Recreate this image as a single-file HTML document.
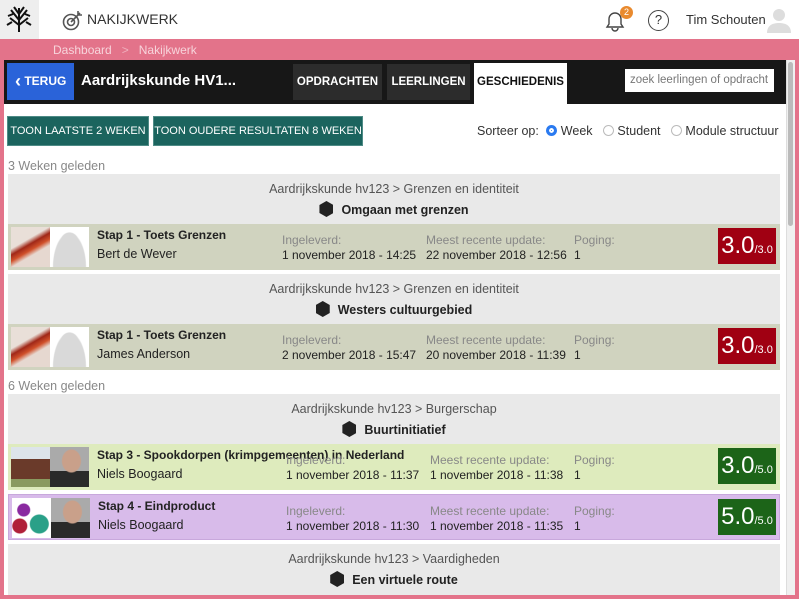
<!DOCTYPE html>
<html><head><meta charset="utf-8"><style>
*{margin:0;padding:0;box-sizing:border-box}
body{width:799px;height:599px;overflow:hidden;position:relative;background:#e3738a;font-family:"Liberation Sans",sans-serif;color:#222}
.a{position:absolute;white-space:nowrap}
.top{left:0;top:0;width:799px;height:39px;background:#fff}
.logo{left:0;top:0;width:39px;height:39px;background:#eee}
.main{left:4px;top:60px;width:791px;height:535px;background:#fff}
.bar{left:4px;top:60px;width:782px;height:44px;background:#171717}
.tab{top:64px;height:36px;background:#2c2c2c;color:#fff;font-weight:bold;font-size:11.5px;line-height:36px;text-align:center}
.btn{top:116px;height:30px;background:#1b645e;color:#fff;font-size:11px;line-height:28px;text-align:center;border:1px solid #4e8b86;overflow:hidden}
.grp{left:8px;width:772px;background:#e9e9e9;text-align:center}
.grp .p{font-size:12.5px;color:#555;margin-top:8px}
.grp .b{font-size:12.5px;font-weight:bold;margin-top:5px}
.hex{display:inline-block;width:14px;height:16px;background:#222;clip-path:polygon(50% 0,100% 25%,100% 75%,50% 100%,0 75%,0 25%);vertical-align:-3px;margin-right:8px}
.row{left:8px;width:772px;height:46px}
.row .t{position:absolute;left:89px;top:4px;font-weight:bold;font-size:12px}
.row .n{position:absolute;left:89px;top:23px;font-size:12.5px}
.lbl{position:absolute;top:9px;font-size:12px;color:#888}
.val{position:absolute;top:24px;font-size:12px;color:#222}
.img1{position:absolute;left:3px;top:3px;width:39px;height:40px}
.img2{position:absolute;left:42px;top:3px;width:39px;height:40px;background:#fff}
.sc{position:absolute;left:710px;top:4px;width:58px;height:36px;color:#fff;font-size:24px;line-height:36px;text-align:center}
.sc small{font-size:11px}
.wk{left:8px;font-size:12.5px;color:#888}
.pen{background:linear-gradient(150deg,#e9dfd8 0,#e9dfd8 35%,#a02818 45%,#d0502a 55%,#e6d8d0 65%)}
.avatar{background:radial-gradient(circle at 50% 35%,#d9d9d9 0 8px,transparent 9px),radial-gradient(ellipse at 50% 100%,#d9d9d9 0 16px,transparent 17px) #fff}
.man{background:radial-gradient(ellipse at 55% 35%,#c9a08a 0 9px,transparent 10px),linear-gradient(#aaa 0,#aaa 60%,#2a2a2a 60%)}
</style></head><body>
<div class="a top"></div>
<div class="a logo"><svg width="39" height="39" viewBox="0 0 39 39"><g stroke="#111" stroke-width="2" fill="none"><path d="M19 32V8M19 20L11 10M19 20l8-10M19 25L10 18M19 25l9-7M19 14l-5-7M19 14l5-7M13 14l-5 2M25 14l5 2M12 22l-5 3M26 22l5 3"/></g></svg></div>
<svg class="a" style="left:62px;top:9px" width="22" height="22" viewBox="0 0 22 22"><circle cx="9" cy="13" r="7.5" fill="none" stroke="#555" stroke-width="1.6"/><circle cx="9" cy="13" r="3.5" fill="none" stroke="#555" stroke-width="1.6"/><path d="M9 13L18 4M16 2v4h4" stroke="#555" stroke-width="1.6" fill="none"/></svg>
<div class="a" style="left:87px;top:11px;font-size:14px;color:#333">NAKIJKWERK</div>
<svg class="a" style="left:604px;top:10px" width="24" height="22" viewBox="0 0 24 22"><path d="M3 17h16l-2-3V9a6 6 0 0 0-12 0v5zM8 18a3 3 0 0 0 6 0" fill="none" stroke="#444" stroke-width="1.4"/></svg>
<div class="a" style="left:620px;top:6px;width:13px;height:13px;border-radius:50%;background:#e98a2e;color:#fff;font-size:9px;text-align:center;line-height:13px">2</div>
<div class="a" style="left:648px;top:10px;width:21px;height:21px;border:1.5px solid #444;border-radius:50%;text-align:center;font-size:13px;line-height:18px;color:#333">?</div>
<div class="a" style="left:686px;top:12px;font-size:13px;color:#333">Tim Schouten</div>
<svg class="a" style="left:766px;top:7px" width="26" height="26" viewBox="0 0 26 26"><circle cx="13" cy="8" r="6" fill="#ddd"/><path d="M1 26c0-8 6-10 12-10s12 2 12 10z" fill="#ddd"/></svg>
<div class="a" style="left:53px;top:43px;font-size:12px;color:#f7d4db">Dashboard &nbsp; <span style="color:#f0b0be">&gt;</span> &nbsp; Nakijkwerk</div>
<div class="a main"></div>
<div class="a bar"></div>
<div class="a" style="left:7px;top:63px;width:67px;height:37px;background:#2a63d9;color:#fff;font-weight:bold;font-size:12px;line-height:37px;padding-left:8px"><span style="font-size:18px;vertical-align:-2px">‹</span> TERUG</div>
<div class="a" style="left:81px;top:72px;color:#fff;font-weight:bold;font-size:15px">Aardrijkskunde HV1...</div>
<div class="a tab" style="left:293px;width:89px">OPDRACHTEN</div>
<div class="a tab" style="left:387px;width:83px">LEERLINGEN</div>
<div class="a tab" style="left:474px;width:93px;top:63px;height:41px;line-height:38px;background:#fff;color:#111">GESCHIEDENIS</div>
<div class="a" style="left:625px;top:69px;width:149px;height:23px;background:#fff;font-size:11.5px;color:#777;line-height:23px;padding-left:5px;overflow:hidden">zoek leerlingen of opdracht</div>
<div class="a" style="left:786px;top:60px;width:9px;height:535px;background:#f0f0f0;border-left:1px solid #ddd"></div>
<div class="a" style="left:788px;top:62px;width:5px;height:164px;background:#bbb;border-radius:3px"></div>
<div class="a btn" style="left:7px;width:142px">TOON LAATSTE 2 WEKEN</div>
<div class="a btn" style="left:153px;width:210px">TOON OUDERE RESULTATEN 8 WEKEN</div>
<div class="a" style="left:477px;top:124px;font-size:12.5px;color:#333">Sorteer op: <span style="display:inline-block;width:11px;height:11px;border-radius:50%;background:#2a7af0;border:3px solid #2a7af0;box-shadow:inset 0 0 0 2px #fff;vertical-align:-1px;margin-left:4px"></span> Week &nbsp; <span style="display:inline-block;width:11px;height:11px;border-radius:50%;border:1px solid #bbb;vertical-align:-1px"></span> Student &nbsp; <span style="display:inline-block;width:11px;height:11px;border-radius:50%;border:1px solid #bbb;vertical-align:-1px"></span> Module structuur</div>

<div class="a wk" style="top:159px">3 Weken geleden</div>
<div class="a grp" style="top:174px;height:50px"><div class="p">Aardrijkskunde hv123 &gt; Grenzen en identiteit</div><div class="b"><span class="hex"></span>Omgaan met grenzen</div></div>
<div class="a row" style="top:224px;background:#d0d3bf"><div class="img1 pen"></div><div class="img2 avatar"></div><div class="t">Stap 1 - Toets Grenzen</div><div class="n">Bert de Wever</div>
<div class="lbl" style="left:274px">Ingeleverd:</div><div class="val" style="left:274px">1 november 2018 - 14:25</div>
<div class="lbl" style="left:418px">Meest recente update:</div><div class="val" style="left:418px">22 november 2018 - 12:56</div>
<div class="lbl" style="left:566px">Poging:</div><div class="val" style="left:566px">1</div>
<div class="sc" style="background:#a00012">3.0<small>/3.0</small></div></div>

<div class="a grp" style="top:274px;height:50px"><div class="p">Aardrijkskunde hv123 &gt; Grenzen en identiteit</div><div class="b"><span class="hex"></span>Westers cultuurgebied</div></div>
<div class="a row" style="top:324px;background:#d0d3bf"><div class="img1 pen"></div><div class="img2 avatar"></div><div class="t">Stap 1 - Toets Grenzen</div><div class="n">James Anderson</div>
<div class="lbl" style="left:274px">Ingeleverd:</div><div class="val" style="left:274px">2 november 2018 - 15:47</div>
<div class="lbl" style="left:418px">Meest recente update:</div><div class="val" style="left:418px">20 november 2018 - 11:39</div>
<div class="lbl" style="left:566px">Poging:</div><div class="val" style="left:566px">1</div>
<div class="sc" style="background:#a00012">3.0<small>/3.0</small></div></div>

<div class="a wk" style="top:379px">6 Weken geleden</div>
<div class="a grp" style="top:394px;height:50px"><div class="p">Aardrijkskunde hv123 &gt; Burgerschap</div><div class="b"><span class="hex"></span>Buurtinitiatief</div></div>
<div class="a row" style="top:444px;background:#deebbd"><div class="img1" style="background:linear-gradient(#dde4ea 0,#dde4ea 30%,#6a3a2a 30%,#6a3a2a 80%,#8a9a60 80%)"></div><div class="img2 man"></div><div class="t">Stap 3 - Spookdorpen (krimpgemeenten) in Nederland</div><div class="n">Niels Boogaard</div>
<div class="lbl" style="left:278px">Ingeleverd:</div><div class="val" style="left:278px">1 november 2018 - 11:37</div>
<div class="lbl" style="left:422px">Meest recente update:</div><div class="val" style="left:422px">1 november 2018 - 11:38</div>
<div class="lbl" style="left:566px">Poging:</div><div class="val" style="left:566px">1</div>
<div class="sc" style="background:#1c6418">3.0<small>/5.0</small></div></div>

<div class="a row" style="top:494px;background:#d8bbea;border:1px solid #c8a8dc"><div class="img1" style="background:radial-gradient(circle at 30% 30%,#8a2aa0 0 6px,transparent 7px),radial-gradient(circle at 70% 65%,#2aa088 0 9px,transparent 10px),radial-gradient(circle at 20% 70%,#b0203a 0 7px,transparent 8px) #fff"></div><div class="img2 man"></div><div class="t">Stap 4 - Eindproduct</div><div class="n">Niels Boogaard</div>
<div class="lbl" style="left:277px">Ingeleverd:</div><div class="val" style="left:277px">1 november 2018 - 11:30</div>
<div class="lbl" style="left:421px">Meest recente update:</div><div class="val" style="left:421px">1 november 2018 - 11:35</div>
<div class="lbl" style="left:565px">Poging:</div><div class="val" style="left:565px">1</div>
<div class="sc" style="left:709px;background:#1c6418">5.0<small>/5.0</small></div></div>

<div class="a grp" style="top:544px;height:51px"><div class="p">Aardrijkskunde hv123 &gt; Vaardigheden</div><div class="b"><span class="hex"></span>Een virtuele route</div></div>
</body></html>
